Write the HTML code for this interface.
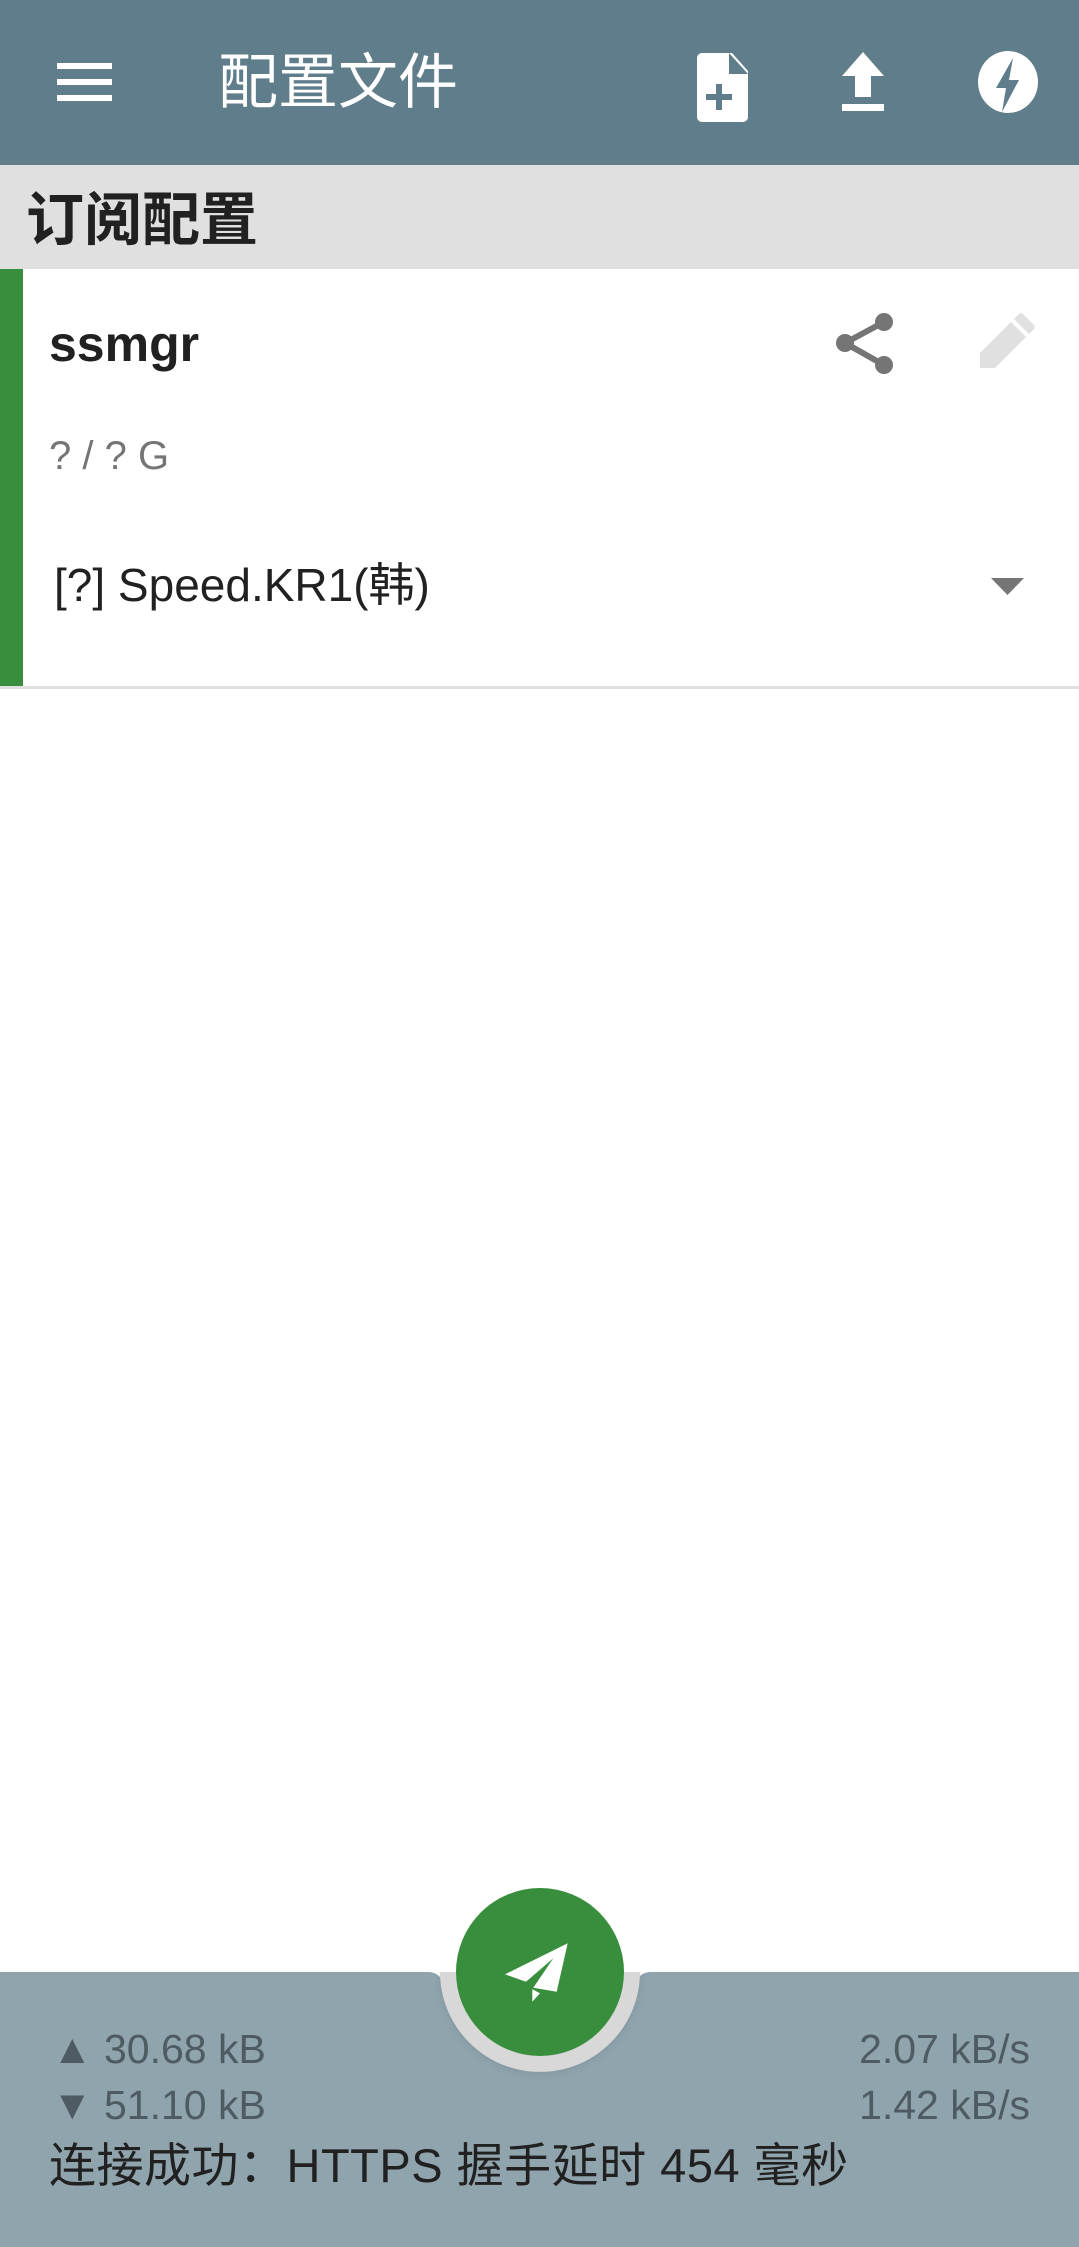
<!DOCTYPE html>
<html><head><meta charset="utf-8"><style>
*{margin:0;padding:0;box-sizing:border-box}
body{width:1079px;height:2247px;position:relative;background:#fff;font-family:"Liberation Sans","Noto Sans CJK SC",sans-serif;overflow:hidden}
.a{position:absolute;white-space:nowrap}
</style></head><body>
<div class="a" style="left:0;top:0;width:1079px;height:165px;background:#607d8b"></div>
<div class="a" style="left:57px;top:63px;width:55px;height:6px;background:#fff"></div>
<div class="a" style="left:57px;top:79px;width:55px;height:6px;background:#fff"></div>
<div class="a" style="left:57px;top:95px;width:55px;height:6px;background:#fff"></div>
<div class="a" style="left:218px;top:49px;font-size:60px;line-height:68px;color:#fff">配置文件</div>
<svg class="a" style="left:0;top:0" width="1079" height="165">
<path d="M702 53h30l16 18v46a5 5 0 0 1-5 5h-41a5 5 0 0 1-5-5v-59a5 5 0 0 1 5-5z" fill="#fff"/>
<path d="M729 53v21h19z" fill="#607d8b"/>
<path d="M716 84h6v10h10v6h-10v10h-6v-10h-10v-6h10z" fill="#607d8b"/>
<path d="M863 52l-21 24h13v21h16v-21h13z" fill="#fff"/><rect x="842" y="104" width="42" height="7" fill="#fff"/>
<ellipse cx="1008" cy="82" rx="30" ry="31" fill="#fff"/>
<path d="M1013 58l-17 30h10l-4 24 17-32h-10z" fill="#607d8b"/>
</svg>
<div class="a" style="left:0;top:165px;width:1079px;height:104px;background:#e0e0e0"></div>
<div class="a" style="left:26px;top:188px;font-size:58px;line-height:66px;font-weight:bold;color:#212121">订阅配置</div>
<div class="a" style="left:0;top:269px;width:23px;height:417px;background:#388e3c"></div>
<div class="a" style="left:0;top:686px;width:1079px;height:3px;background:#e0e0e0"></div>
<div class="a" style="left:49px;top:316px;font-size:50px;line-height:56px;font-weight:bold;color:#212121">ssmgr</div>
<svg class="a" style="left:0;top:269px" width="1079" height="420">
<g fill="#757575"><circle cx="884" cy="53" r="9"/><circle cx="845" cy="74" r="9"/><circle cx="884" cy="96" r="9"/></g>
<path d="M884 53L845 74L884 96" stroke="#757575" stroke-width="6" fill="none"/>
<path d="M980 84v15h15l31-31-15-15z M1014 50l15 15 5-5a3 3 0 0 0 0-4l-11-11a3 3 0 0 0-4 0z" fill="#e0e0e0"/>
<path d="M991 309h33l-16.5 17z" fill="#757575"/>
</svg>
<div class="a" style="left:49px;top:433px;font-size:40px;line-height:46px;color:#757575">? / ? G</div>
<div class="a" style="left:54px;top:558px;font-size:46px;line-height:54px;color:#212121">[?] Speed.KR1(韩)</div>
<svg class="a" style="left:0;top:1860px" width="1079" height="387">
<defs><filter id="s" x="-50%" y="-50%" width="200%" height="200%"><feGaussianBlur stdDeviation="5"/></filter></defs>
<path d="M0 112H428Q442 112 446 130A97 97 0 0 0 633 130Q637 112 651 112H1079V387H0z" fill="#90a4ae"/>
<circle cx="540" cy="114" r="98" fill="#000" opacity="0.12" filter="url(#s)"/>
<circle cx="540" cy="112" r="98" fill="#d8d8d8"/>
<rect x="420" y="0" width="240" height="112" fill="#fff"/>
<path d="M440 112A100 100 0 0 0 640 112z" fill="#d8d8d8"/>
<circle cx="540" cy="112" r="84" fill="#388e3c"/>
<path d="M567.7 83.3L505 114.3L526 121.7L553.3 98.3L533.3 127.7L556.7 131.7z M532.3 129.3L540 133.3L532.3 141.7z" fill="#fff"/>
</svg>
<div class="a" style="left:52px;top:2026px;font-size:41px;line-height:46px;color:#4f5b62">▲ 30.68 kB</div>
<div class="a" style="left:52px;top:2082px;font-size:41px;line-height:46px;color:#4f5b62">▼ 51.10 kB</div>
<div class="a" style="right:49px;top:2026px;font-size:41px;line-height:46px;color:#4f5b62">2.07 kB/s</div>
<div class="a" style="right:49px;top:2082px;font-size:41px;line-height:46px;color:#4f5b62">1.42 kB/s</div>
<div class="a" style="left:49px;top:2139px;font-size:47px;line-height:54px;color:#212121;letter-spacing:0.5px">连接成功：HTTPS 握手延时 454 毫秒</div>
</body></html>
